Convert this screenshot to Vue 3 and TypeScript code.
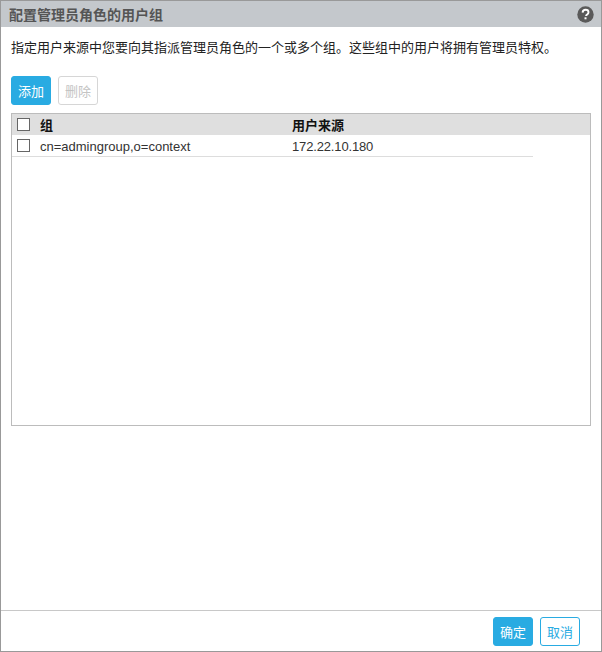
<script setup lang="ts">
const description = '指定用户来源中您要向其指派管理员角色的一个或多个组。这些组中的用户将拥有管理员特权。'
const rows = [{ group: 'cn=admingroup,o=context', source: '172.22.10.180' }]
</script>

<template>
  <div class="dialog">
    <header class="titlebar">
      <span class="title">配置管理员角色的用户组</span>
      <svg class="help" width="17" height="17" viewBox="0 0 17 17" aria-label="帮助">
        <circle cx="8.5" cy="8.5" r="8.2" fill="#5a5a5a" />
        <path d="M5.6 6.6c.1-1.8 1.3-2.8 3-2.8 1.700 0 2.900 1 2.900 2.400 0 1.100-.6 1.700-1.400 2.300-.7.500-1 .8-1 1.600" fill="none" stroke="#fff" stroke-width="1.900" />
        <rect x="7.500" y="11.300" width="2" height="2" fill="#fff" />
      </svg>
    </header>
    <main class="body">
      <p class="desc">{{ description }}</p>
      <div class="actions">
        <button class="btn primary" type="button">添加</button>
        <button class="btn disabled" type="button">删除</button>
      </div>
      <section class="table">
        <div class="row head">
          <span class="check"></span>
          <span class="col-group">组</span>
          <span class="col-source">用户来源</span>
        </div>
        <div v-for="r in rows" :key="r.group" class="row item">
          <span class="check"></span>
          <span class="col-group cell">{{ r.group }}</span>
          <span class="col-source cell value">{{ r.source }}</span>
        </div>
      </section>
    </main>
    <footer class="footer">
      <button class="btn primary" type="button">确定</button>
      <button class="btn outline" type="button">取消</button>
    </footer>
  </div>
</template>

<style>
html, body { margin: 0; padding: 0; background: #fff; }
</style>

<style scoped>
.dialog {
  box-sizing: border-box;
  width: 602px;
  height: 652px;
  border: 1px solid #999;
  display: flex;
  flex-direction: column;
  background: #fff;
  color: #222;
  font: 13px "Liberation Sans", "Noto Sans CJK SC", sans-serif;
}
.titlebar {
  height: 26px;
  flex: none;
  display: flex;
  align-items: center;
  justify-content: space-between;
  padding: 0 7px 0 8px;
  background: #c4c8cc;
}
.title { font-size: 14px; font-weight: 700; color: #555; }
.help { display: block; }
.body { flex: 1; padding: 0 10px; min-height: 0; }
.desc { margin: 0; padding-top: 12px; line-height: 17px; height: 37px; }
.actions { display: flex; gap: 7px; }
.btn {
  box-sizing: border-box;
  width: 40px;
  height: 29px;
  padding: 0;
  border-radius: 3px;
  font: inherit;
  background: #fff;
}
.primary { border: 1px solid #29abe2; background: #29abe2; color: #fff; }
.disabled { border: 1px solid #d6d6d6; color: #c4c4c4; }
.outline { border: 1px solid #29abe2; color: #29abe2; }
.table {
  box-sizing: border-box;
  margin-top: 8px;
  width: 580px;
  height: 313px;
  border: 1px solid #bcbcbc;
}
.row { display: flex; align-items: center; }
.head { height: 21px; background: #dfdfdf; font-weight: 700; color: #111; }
.item { height: 22px; width: 521px; box-sizing: border-box; border-bottom: 1px solid #ddd; }
.check {
  box-sizing: border-box;
  flex: none;
  width: 13px;
  height: 13px;
  margin-left: 5px;
  border: 1px solid #666;
  background: #fff;
}
.col-group { box-sizing: border-box; width: 252px; margin-left: 10px; }
.cell { padding-top: 1px; color: #333; }
.value { letter-spacing: -0.15px; }
.footer {
  flex: none;
  height: 41px;
  box-sizing: border-box;
  border-top: 1px solid #c8c8c8;
  display: flex;
  justify-content: flex-end;
  align-items: flex-start;
  gap: 7px;
  padding: 6px 21px 0 0;
}
</style>
